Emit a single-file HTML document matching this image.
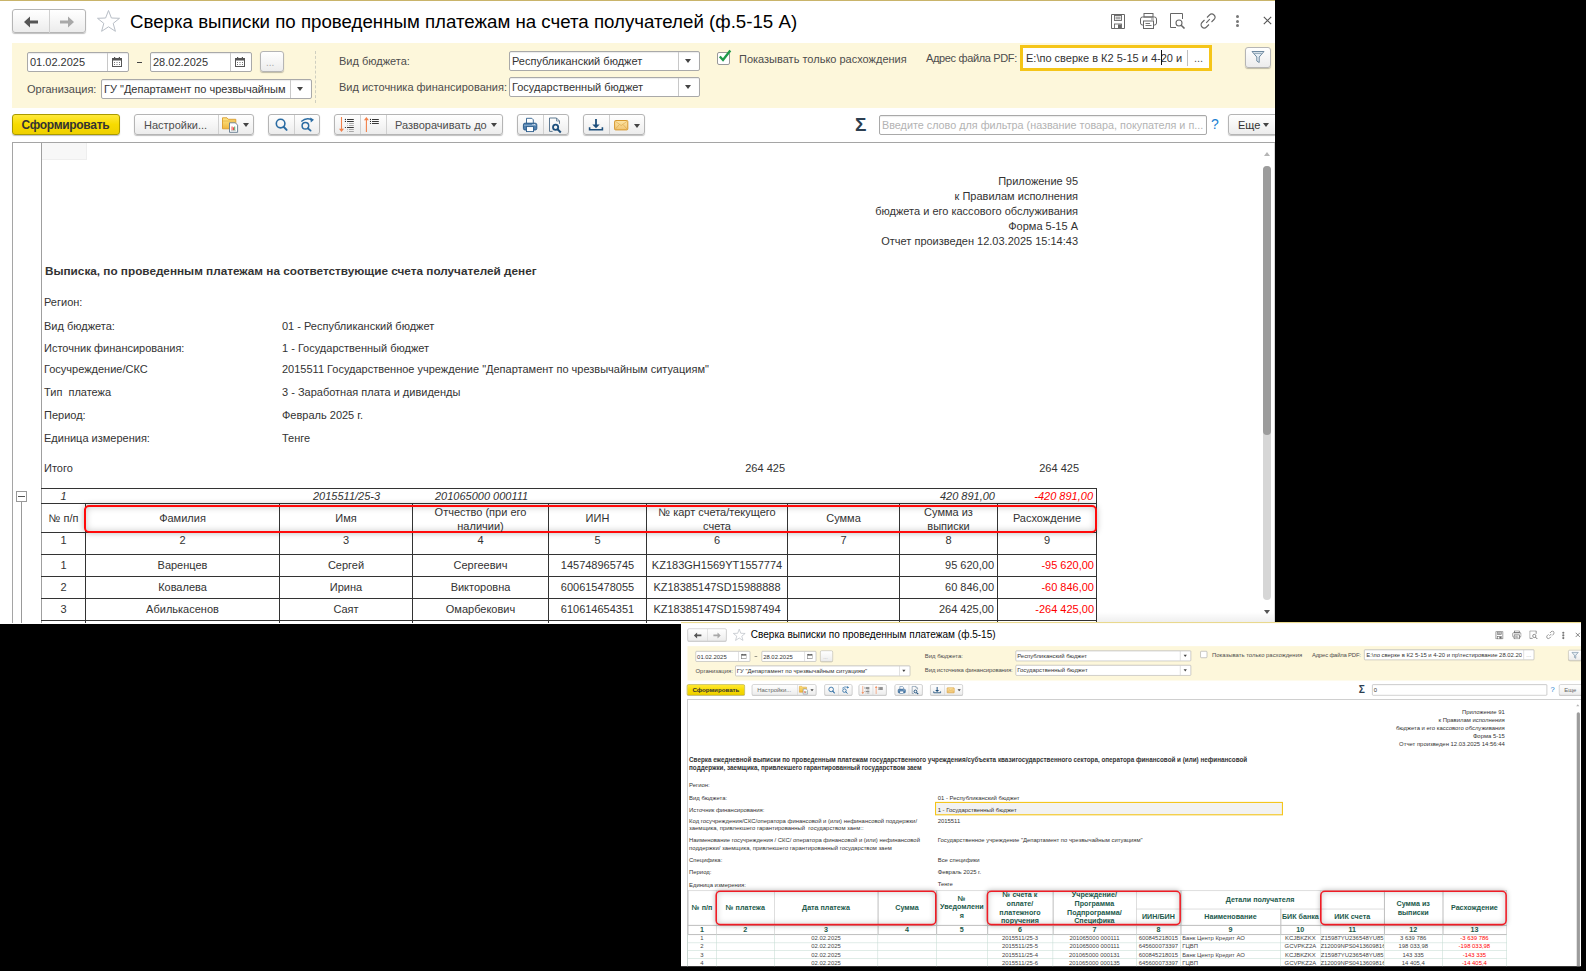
<!DOCTYPE html>
<html><head><meta charset="utf-8">
<style>
html,body{margin:0;padding:0}
body{background:#000;width:1586px;height:971px;overflow:hidden;position:relative;font-family:"Liberation Sans",sans-serif;color:#333}
.w{position:absolute;background:#fff;overflow:hidden}
.a{position:absolute}
.t{position:absolute;white-space:nowrap;font-size:11px;line-height:13px;color:#4d4d4d}
.btn{position:absolute;box-sizing:border-box;border:1px solid #b5b5b5;border-radius:3px;background:linear-gradient(#fff,#f4f4f4 60%,#ececec);box-shadow:0 1px 1px rgba(0,0,0,.25)}
.inp{position:absolute;box-sizing:border-box;border:1px solid #a9a9a9;border-radius:2px;background:#fff;box-shadow:inset 0 1px 1px rgba(0,0,0,.08)}
.div{position:absolute;top:0;bottom:0;width:1px;background:#c8c8c8}
.dd{position:absolute;width:0;height:0;border-left:3.5px solid transparent;border-right:3.5px solid transparent;border-top:4px solid #444}
.g{position:absolute;background:#2b2b2b}
.c{position:absolute;white-space:nowrap;font-size:11px;line-height:13px;color:#333;text-align:center}
</style></head><body>

<!-- ================= WINDOW 1 ================= -->
<div class="w" id="w1" style="left:0;top:0;width:1275px;height:624px">
  <div class="a" style="left:0;top:0;width:1275px;height:1px;background:#c9b46a"></div>

  <!-- nav buttons -->
  <div class="btn" style="left:12px;top:9px;width:74px;height:24px;border-radius:3px"></div>
  <div class="a" style="left:49px;top:10px;width:1px;height:23px;background:#d0d0d0"></div>
  <svg class="a" style="left:24px;top:16px" width="16" height="12" viewBox="0 0 16 12"><path d="M0 6 L6 0.5 V4.5 H14 V7.5 H6 V11.5 Z" fill="#555"/></svg>
  <svg class="a" style="left:60px;top:16px" width="16" height="12" viewBox="0 0 16 12"><path d="M14 6 L8 0.5 V4.5 H0 V7.5 H8 V11.5 Z" fill="#a8a8a8"/></svg>
  <!-- star -->
  <svg class="a" style="left:96px;top:9px" width="25" height="24" viewBox="0 0 25 24"><path d="M12.5 1.5 L15.4 9 L23.5 9.3 L17.2 14.4 L19.4 22.3 L12.5 17.8 L5.6 22.3 L7.8 14.4 L1.5 9.3 L9.6 9 Z" fill="none" stroke="#b8bec6" stroke-width="1"/></svg>
  <div class="t" style="left:130px;top:11px;font-size:18.7px;line-height:22px;color:#000">Сверка выписки по проведенным платежам на счета получателей (ф.5-15 А)</div>


  <!-- title bar icons -->
  <svg class="a" style="left:1110px;top:14px" width="16" height="15" viewBox="0 0 16 15"><path d="M1.5 0.5 H14.5 V14.5 H1.5 Z" fill="none" stroke="#666" stroke-width="1" rx="1"/><rect x="4.5" y="1.5" width="7" height="5" fill="none" stroke="#666" stroke-width="0.9"/><path d="M5.5 3.2 H10.5 M5.5 4.8 H10.5" stroke="#666" stroke-width="0.8"/><rect x="4.5" y="10" width="7" height="4.5" fill="#fff" stroke="#666" stroke-width="0.9"/><rect x="8" y="10.5" width="3" height="3.5" fill="#666"/></svg>
  <svg class="a" style="left:1140px;top:13px" width="17" height="16" viewBox="0 0 17 16"><rect x="4" y="0.5" width="9" height="3.5" fill="none" stroke="#666" stroke-width="1"/><rect x="0.5" y="4" width="16" height="8" rx="2" fill="none" stroke="#666" stroke-width="1"/><rect x="3.5" y="8" width="10" height="7.5" fill="#fff" stroke="#666" stroke-width="1"/><path d="M5.5 10.5 H10 M5.5 12.5 H11.5" stroke="#666" stroke-width="0.9"/><path d="M11 6 H14" stroke="#666" stroke-width="0.8"/></svg>
  <svg class="a" style="left:1170px;top:13px" width="16" height="16" viewBox="0 0 16 16"><path d="M6 14.5 H0.5 V0.5 H12.5 V6" fill="none" stroke="#666" stroke-width="1"/><circle cx="9" cy="10" r="3" fill="none" stroke="#666" stroke-width="1.1"/><path d="M11.2 12.2 L14.5 15.5" stroke="#666" stroke-width="1.6"/></svg>
  <svg class="a" style="left:1200px;top:13px" width="16" height="16" viewBox="0 0 16 16"><path d="M6.2 9.8 L9.8 6.2" stroke="#666" stroke-width="1.1"/><path d="M7 4.5 L9.5 2 A2.8 2.8 0 0 1 14 6.5 L11.5 9" fill="none" stroke="#666" stroke-width="1.1"/><path d="M9 11.5 L6.5 14 A2.8 2.8 0 0 1 2 9.5 L4.5 7" fill="none" stroke="#666" stroke-width="1.1"/></svg>
  <g></g>
  <div class="a" style="left:1236px;top:15px;width:3px;height:3px;border-radius:2px;background:#777"></div>
  <div class="a" style="left:1236px;top:19.5px;width:3px;height:3px;border-radius:2px;background:#777"></div>
  <div class="a" style="left:1236px;top:24px;width:3px;height:3px;border-radius:2px;background:#777"></div>
  <svg class="a" style="left:1263px;top:16px" width="9" height="9" viewBox="0 0 9 9"><path d="M0.8 0.8 L8.2 8.2 M8.2 0.8 L0.8 8.2" stroke="#555" stroke-width="1.1"/></svg>
  <!-- yellow panel -->
  <div class="a" style="left:12px;top:43px;width:1263px;height:65px;background:#fdf7db"></div>

  <!-- date 1 -->
  <div class="inp" style="left:27px;top:52px;width:102px;height:20px"><div class="div" style="left:79px"></div></div>
  <div class="t" style="left:30px;top:56px;color:#333;font-size:11px">01.02.2025</div>
  <svg class="a" style="left:112px;top:57px" width="10" height="10" viewBox="0 0 10 10"><rect x="0.5" y="1.5" width="9" height="8" fill="none" stroke="#555"/><rect x="0.5" y="1.5" width="9" height="2" fill="#555"/><rect x="2" y="0" width="1.2" height="2.5" fill="#555"/><rect x="6.8" y="0" width="1.2" height="2.5" fill="#555"/><g fill="#777"><rect x="2" y="5" width="1" height="1"/><rect x="4.5" y="5" width="1" height="1"/><rect x="7" y="5" width="1" height="1"/><rect x="2" y="7" width="1" height="1"/><rect x="4.5" y="7" width="1" height="1"/><rect x="7" y="7" width="1" height="1"/></g></svg>
  <div class="a" style="left:137px;top:62px;width:5px;height:1px;background:#444"></div>
  <!-- date 2 -->
  <div class="inp" style="left:150px;top:52px;width:102px;height:20px"><div class="div" style="left:79px"></div></div>
  <div class="t" style="left:153px;top:56px;color:#333;font-size:11px">28.02.2025</div>
  <svg class="a" style="left:235px;top:57px" width="10" height="10" viewBox="0 0 10 10"><rect x="0.5" y="1.5" width="9" height="8" fill="none" stroke="#555"/><rect x="0.5" y="1.5" width="9" height="2" fill="#555"/><rect x="2" y="0" width="1.2" height="2.5" fill="#555"/><rect x="6.8" y="0" width="1.2" height="2.5" fill="#555"/><g fill="#777"><rect x="2" y="5" width="1" height="1"/><rect x="4.5" y="5" width="1" height="1"/><rect x="7" y="5" width="1" height="1"/><rect x="2" y="7" width="1" height="1"/><rect x="4.5" y="7" width="1" height="1"/><rect x="7" y="7" width="1" height="1"/></g></svg>
  <div class="btn" style="left:260px;top:51px;width:24px;height:21px"></div>
  <div class="t" style="left:266px;top:56px;color:#aaa;font-size:10px">...</div>
  <div class="a" style="left:315px;top:51px;width:0;height:52px;border-left:1px dashed #cfcfc0"></div>
  <!-- org -->
  <div class="t" style="left:27px;top:83px">Организация:</div>
  <div class="inp" style="left:101px;top:79px;width:211px;height:20px;overflow:hidden"><div class="div" style="left:188px"></div></div>
  <div class="t" style="left:104px;top:83px;color:#333;width:184px;overflow:hidden">ГУ "Департамент по чрезвычайным ситуациям"</div>
  <div class="dd" style="left:297px;top:87px"></div>
  <!-- budget -->
  <div class="t" style="left:339px;top:55px">Вид бюджета:</div>
  <div class="t" style="left:339px;top:81px">Вид источника финансирования:</div>
  <div class="inp" style="left:509px;top:51px;width:191px;height:20px"><div class="div" style="left:168px"></div></div>
  <div class="t" style="left:512px;top:55px;color:#333">Республиканский бюджет</div>
  <div class="dd" style="left:685px;top:59px"></div>
  <div class="inp" style="left:509px;top:77px;width:191px;height:20px"><div class="div" style="left:168px"></div></div>
  <div class="t" style="left:512px;top:81px;color:#333">Государственный бюджет</div>
  <div class="dd" style="left:685px;top:85px"></div>
  <!-- checkbox -->
  <div class="a" style="left:717px;top:52px;width:13px;height:13px;box-sizing:border-box;border:1px solid #999;border-radius:2px;background:#fff"></div>
  <svg class="a" style="left:718px;top:49px" width="14" height="14" viewBox="0 0 14 14"><path d="M1.8 7.5 L5 11 L12.3 1.5" fill="none" stroke="#1e9a4a" stroke-width="2.4"/></svg>
  <div class="t" style="left:739px;top:53px">Показывать только расхождения</div>
  <div class="t" style="left:926px;top:52px;letter-spacing:-0.35px">Адрес файла PDF:</div>
  <div class="a" style="left:1020px;top:45px;width:192px;height:26px;box-sizing:border-box;border:3px solid #f5c518;background:#fff"></div>
  <div class="a" style="left:1187px;top:50px;width:1px;height:16px;background:#c0c0c0"></div>
  <div class="t" style="left:1026px;top:52px;color:#333">E:\по сверке в К2 5-15 и 4-20 и</div>
  <div class="a" style="left:1161px;top:50px;width:1px;height:15px;background:#111"></div>
  <div class="t" style="left:1194px;top:52px;color:#555">...</div>
  <div class="btn" style="left:1245px;top:47px;width:26px;height:21px"></div>
  <svg class="a" style="left:1251px;top:50px" width="14" height="14" viewBox="0 0 14 14"><path d="M1 1.5 H13 L8.2 7 V12.5 L5.8 11 V7 Z" fill="#e6eef5" stroke="#6f8aa0" stroke-width="1"/><path d="M3.3 3.3 H10.7" stroke="#6f8aa0" stroke-width="0.8"/></svg>

  <!-- ======= toolbar ======= -->
  <div class="a" style="left:12px;top:114px;width:108px;height:21px;box-sizing:border-box;border:1px solid #a99a00;border-radius:3px;background:linear-gradient(#ffe93a,#f7db00 50%,#efd000);box-shadow:0 1px 1px rgba(0,0,0,.25)"></div>
  <div class="t" style="left:21.5px;top:118.5px;font-weight:bold;font-size:12px;letter-spacing:-0.3px;color:#333">Сформировать</div>

  <div class="btn" style="left:134px;top:114px;width:120px;height:21px"><div class="div" style="left:83px;background:#d0d0d0"></div></div>
  <div class="t" style="left:144px;top:119px">Настройки...</div>
  <svg class="a" style="left:215px;top:112px" width="30" height="26" viewBox="0 0 30 26"><defs><linearGradient id="fg" x1="0" y1="0" x2="0" y2="1"><stop offset="0" stop-color="#ffe98a"/><stop offset="1" stop-color="#f0b63c"/></linearGradient></defs><path d="M7.5 5.8 H12 L13.3 7.3 H20.8 V16.8 H7.5 Z" fill="url(#fg)" stroke="#d99a2b" stroke-width="0.9"/><path d="M7.6 9 H20.7" stroke="#e2ac3e" stroke-width="0.7"/><path d="M14.5 10.8 H20.3 L22.6 13.1 V20.3 H14.5 Z" fill="#fff" stroke="#62788c" stroke-width="0.9"/><rect x="16.6" y="14.5" width="0.9" height="3.8" fill="#e53030"/><rect x="18" y="15.3" width="0.9" height="3" fill="#e53030"/><rect x="19.3" y="14.5" width="0.9" height="3.8" fill="#3aa04a"/><path d="M16 18.6 H21" stroke="#9aa" stroke-width="0.5"/></svg>
  <div class="dd" style="left:243px;top:123px"></div>

  <div class="btn" style="left:268px;top:114px;width:52px;height:21px"><div class="div" style="left:25px;background:#d0d0d0"></div></div>
  <svg class="a" style="left:268px;top:112px" width="52" height="26" viewBox="0 0 52 26"><circle cx="12.6" cy="11.6" r="4.3" fill="none" stroke="#2b6ca3" stroke-width="1.6"/><path d="M15.6 14.8 L18.6 17.9" stroke="#2b6ca3" stroke-width="2" stroke-linecap="round"/><circle cx="37.4" cy="13.8" r="3.3" fill="none" stroke="#2b6ca3" stroke-width="1.5"/><path d="M39.8 16.3 L42.6 18.6" stroke="#2b6ca3" stroke-width="1.8" stroke-linecap="round"/><path d="M33.3 9.4 Q38 5.2 43.6 7.6" fill="none" stroke="#2b6ca3" stroke-width="1.3"/><path d="M42.2 5.6 L46 7.7 L42.8 10.4 Z" fill="#2b6ca3"/></svg>

  <div class="btn" style="left:334px;top:114px;width:169px;height:21px"><div class="div" style="left:25px;background:#d0d0d0"></div><div class="div" style="left:51px;background:#d0d0d0"></div></div>
  <svg class="a" style="left:332px;top:112px" width="52" height="26" viewBox="0 0 52 26"><path d="M9.5 5 V17.5" stroke="#f2804a" stroke-width="1.1"/><path d="M7 16.8 H12 L9.5 20 Z" fill="#f2804a"/><g fill="#222"><circle cx="13.4" cy="7.4" r="0.6"/><rect x="15" y="7" width="6.8" height="0.9"/><circle cx="13.4" cy="9.4" r="0.6"/><rect x="15" y="9" width="6.8" height="0.9"/><circle cx="13.4" cy="15.5" r="0.6"/><rect x="15" y="15.1" width="6.8" height="0.9"/></g><g fill="#888"><circle cx="15.4" cy="11.5" r="0.45"/><rect x="17" y="11.2" width="4.8" height="0.7"/><circle cx="15.4" cy="13.4" r="0.45"/><rect x="17" y="13.1" width="4.8" height="0.7"/><circle cx="15.4" cy="17.5" r="0.45"/><rect x="17" y="17.2" width="4.8" height="0.7"/><circle cx="15.4" cy="19.4" r="0.45"/><rect x="17" y="19.1" width="4.8" height="0.7"/></g><path d="M34.4 7.5 V20" stroke="#f2804a" stroke-width="1.1"/><path d="M31.9 8.3 H36.9 L34.4 5 Z" fill="#f2804a"/><g fill="#222"><circle cx="38.5" cy="7.4" r="0.6"/><rect x="40" y="7" width="6.8" height="0.9"/><circle cx="38.5" cy="9.4" r="0.6"/><rect x="40" y="9" width="6.8" height="0.9"/><circle cx="38.5" cy="11.5" r="0.6"/><rect x="40" y="11.1" width="6.8" height="0.9"/></g></svg>
  <div class="t" style="left:395px;top:119px">Разворачивать до</div>
  <div class="dd" style="left:491px;top:123px"></div>

  <div class="btn" style="left:517px;top:114px;width:52px;height:21px"><div class="div" style="left:25px;background:#d0d0d0"></div></div>
  <svg class="a" style="left:515px;top:112px" width="52" height="26" viewBox="0 0 52 26"><path d="M11.5 6.3 H16.8 L18.3 7.8 V11.5 H11.5 Z" fill="#fff" stroke="#2c5d8c" stroke-width="0.9"/><rect x="8.4" y="11.2" width="13.4" height="6.8" rx="1.6" fill="#4f7fae" stroke="#2c5d8c" stroke-width="1"/><path d="M9 13.3 H21.2" stroke="#8fb0d0" stroke-width="0.9"/><rect x="17.5" y="12" width="1" height="0.9" fill="#fff"/><rect x="19.2" y="12" width="1" height="0.9" fill="#fff"/><rect x="11.5" y="14.6" width="7" height="5" fill="#fff" stroke="#2c5d8c" stroke-width="0.9"/><path d="M44.5 11.8 V9 L41.5 6 H34.5 V19.4 H37.6" fill="none" stroke="#4d6b87" stroke-width="0.9"/><path d="M41.5 6 V9 H44.5" fill="none" stroke="#4d6b87" stroke-width="0.7"/><circle cx="40.6" cy="15.3" r="2.6" fill="none" stroke="#1d4f7c" stroke-width="1.8"/><path d="M42.6 17.3 L45.8 20.5" stroke="#1d4f7c" stroke-width="2"/></svg>

  <div class="btn" style="left:583px;top:114px;width:62px;height:21px"><div class="div" style="left:25px;background:#d0d0d0"></div></div>
  <svg class="a" style="left:583px;top:112px" width="48" height="26" viewBox="0 0 48 26"><path d="M13 7 V14" stroke="#1d4f7c" stroke-width="1.8"/><path d="M9.3 12.5 H16.7 L13 16.3 Z" fill="#1d4f7c"/><path d="M6.6 15.2 V17.8 H19.4 V15.2" fill="none" stroke="#1d4f7c" stroke-width="1.6"/><defs><linearGradient id="eg" x1="0" y1="0" x2="0" y2="1"><stop offset="0" stop-color="#fde5a6"/><stop offset="1" stop-color="#f1c472"/></linearGradient></defs><rect x="31.6" y="8.5" width="13.2" height="9.4" rx="1" fill="url(#eg)" stroke="#d6982e" stroke-width="1"/><path d="M32 9 L38.2 13.6 L44.4 9 M32 17.5 L36.3 12.6 M44.4 17.5 L40.1 12.6" fill="none" stroke="#d9a445" stroke-width="0.6"/></svg>
  <div class="dd" style="left:634px;top:124px"></div>

  <div class="t" style="left:855px;top:115px;font-size:19px;line-height:20px;color:#2c3e50;font-weight:bold">&#931;</div>
  <div class="inp" style="left:879px;top:115px;width:328px;height:20px"></div>
  <div class="t" style="left:882px;top:119px;color:#b3b3b3;font-size:10.8px;width:322px;overflow:hidden">Введите слово для фильтра (название товара, покупателя и п...</div>
  <div class="t" style="left:1211px;top:116px;font-size:14px;line-height:16px;color:#1b7fd1">?</div>
  <div class="btn" style="left:1228px;top:114px;width:50px;height:21px"></div>
  <div class="t" style="left:1238px;top:119px;color:#333">Еще</div>
  <div class="dd" style="left:1263px;top:123px"></div>

  <!-- doc area -->
  <div class="a" style="left:12px;top:142px;width:1263px;height:1px;background:#a5a5a5"></div>
  <div class="a" style="left:12px;top:142px;width:1px;height:481px;background:#a5a5a5"></div>
  <div class="a" style="left:41px;top:143px;width:1px;height:480px;background:#9f9f9f"></div>
  <div class="a" style="left:42px;top:143px;width:45px;height:17px;box-sizing:border-box;background:#f7f7f7;border-right:1px solid #eee;border-bottom:1px solid #eee"></div>

  <!-- report header -->
  <div class="t" style="left:700px;width:378px;text-align:right;top:174px;color:#333;line-height:15px">Приложение 95<br>к Правилам исполнения<br>бюджета и его кассового обслуживания<br>Форма 5-15 А<br>Отчет произведен 12.03.2025 15:14:43</div>
  <div class="t" style="left:45px;top:264px;font-weight:bold;font-size:11.76px;line-height:14px;color:#333">Выписка, по проведенным платежам на соответствующие счета получателей денег</div>
  <div class="t" style="left:44px;top:296px;color:#333">Регион:</div>
  <div class="t" style="left:44px;top:320px;color:#333">Вид бюджета:</div>
  <div class="t" style="left:282px;top:320px;color:#333">01 - Республиканский бюджет</div>
  <div class="t" style="left:44px;top:342px;color:#333">Источник финансирования:</div>
  <div class="t" style="left:282px;top:342px;color:#333">1 - Государственный бюджет</div>
  <div class="t" style="left:44px;top:363px;color:#333">Госучреждение/СКС</div>
  <div class="t" style="left:282px;top:363px;color:#333">2015511 Государственное учреждение "Департамент по чрезвычайным ситуациям"</div>
  <div class="t" style="left:44px;top:386px;color:#333;white-space:pre">Тип  платежа</div>
  <div class="t" style="left:282px;top:386px;color:#333">3 - Заработная плата и дивиденды</div>
  <div class="t" style="left:44px;top:409px;color:#333">Период:</div>
  <div class="t" style="left:282px;top:409px;color:#333">Февраль 2025 г.</div>
  <div class="t" style="left:44px;top:432px;color:#333">Единица измерения:</div>
  <div class="t" style="left:282px;top:432px;color:#333">Тенге</div>
  <div class="t" style="left:44px;top:462px;color:#333">Итого</div>
  <div class="t" style="left:685px;width:100px;text-align:right;top:462px;color:#333">264 425</div>
  <div class="t" style="left:979px;width:100px;text-align:right;top:462px;color:#333">264 425</div>

  <!-- collapse -->
  <div class="a" style="left:16px;top:491px;width:11px;height:11px;box-sizing:border-box;border:1px solid #999;background:#fff"></div>
  <div class="a" style="left:18px;top:496px;width:7px;height:1px;background:#555"></div>
  <div class="a" style="left:21px;top:502px;width:1px;height:121px;background:#999"></div>

  <!-- table lines -->
  <div class="a" style="left:41px;top:488px;width:1056px;height:1px;background:#333"></div>
  <div class="a" style="left:41px;top:503px;width:1056px;height:1px;background:#333"></div>
  <div class="a" style="left:41px;top:532px;width:1056px;height:1px;background:#333"></div>
  <div class="a" style="left:41px;top:554px;width:1056px;height:1px;background:#333"></div>
  <div class="a" style="left:41px;top:576px;width:1056px;height:1px;background:#333"></div>
  <div class="a" style="left:41px;top:598px;width:1056px;height:1px;background:#333"></div>
  <div class="a" style="left:41px;top:620px;width:1056px;height:1px;background:#333"></div>
  <div class="a" style="left:1096px;top:488px;width:1px;height:135px;background:#333"></div>
  <div class="a" style="left:85px;top:503px;width:1px;height:120px;background:#333"></div>
  <div class="a" style="left:279px;top:503px;width:1px;height:120px;background:#333"></div>
  <div class="a" style="left:412px;top:503px;width:1px;height:120px;background:#333"></div>
  <div class="a" style="left:548px;top:503px;width:1px;height:120px;background:#333"></div>
  <div class="a" style="left:646px;top:503px;width:1px;height:120px;background:#333"></div>
  <div class="a" style="left:787px;top:503px;width:1px;height:120px;background:#333"></div>
  <div class="a" style="left:899px;top:503px;width:1px;height:120px;background:#333"></div>
  <div class="a" style="left:997px;top:503px;width:1px;height:120px;background:#333"></div>

  <!-- italic row -->
  <div class="t" style="left:42px;width:43px;text-align:center;top:490px;font-style:italic;color:#333">1</div>
  <div class="t" style="left:313px;top:490px;font-style:italic;color:#333">2015511/25-3</div>
  <div class="t" style="left:435px;top:490px;font-style:italic;color:#333">201065000 000111</div>
  <div class="t" style="left:895px;width:100px;text-align:right;top:490px;font-style:italic;color:#333">420 891,00</div>
  <div class="t" style="left:993px;width:100px;text-align:right;top:490px;font-style:italic;color:#f00">-420 891,00</div>

  <!-- red box -->
  <div class="a" style="left:84px;top:504.5px;width:1013px;height:28.5px;box-sizing:border-box;border:2.5px solid #ff0a0a;border-radius:5px;box-shadow:0 0 6px rgba(0,0,0,.28),inset 0 0 7px rgba(0,0,0,.22)"></div>

  <!-- header -->
  <div class="c" style="left:42px;width:43px;top:512px">№ п/п</div>
  <div class="c" style="left:86px;width:193px;top:512px">Фамилия</div>
  <div class="c" style="left:280px;width:132px;top:512px">Имя</div>
  <div class="c" style="left:413px;width:135px;top:505px;line-height:14px">Отчество (при его<br>наличии)</div>
  <div class="c" style="left:549px;width:97px;top:512px">ИИН</div>
  <div class="c" style="left:647px;width:140px;top:505px;line-height:14px">№ карт счета/текущего<br>счета</div>
  <div class="c" style="left:788px;width:111px;top:512px">Сумма</div>
  <div class="c" style="left:900px;width:97px;top:505px;line-height:14px">Сумма из<br>выписки</div>
  <div class="c" style="left:998px;width:98px;top:512px">Расхождение</div>
  <!-- numbers -->
  <div class="c" style="left:42px;width:43px;top:534px">1</div>
  <div class="c" style="left:86px;width:193px;top:534px">2</div>
  <div class="c" style="left:280px;width:132px;top:534px">3</div>
  <div class="c" style="left:413px;width:135px;top:534px">4</div>
  <div class="c" style="left:549px;width:97px;top:534px">5</div>
  <div class="c" style="left:647px;width:140px;top:534px">6</div>
  <div class="c" style="left:788px;width:111px;top:534px">7</div>
  <div class="c" style="left:900px;width:97px;top:534px">8</div>
  <div class="c" style="left:998px;width:98px;top:534px">9</div>
  <!-- rows -->
  <div class="c" style="left:42px;width:43px;top:559px">1</div>
  <div class="c" style="left:86px;width:193px;top:559px">Варенцев</div>
  <div class="c" style="left:280px;width:132px;top:559px">Сергей</div>
  <div class="c" style="left:413px;width:135px;top:559px">Сергеевич</div>
  <div class="c" style="left:549px;width:97px;top:559px">145748965745</div>
  <div class="c" style="left:647px;width:140px;top:559px">KZ183GH1569YT1557774</div>
  <div class="t" style="left:899px;width:95px;text-align:right;top:559px;color:#333">95 620,00</div>
  <div class="t" style="left:998px;width:96px;text-align:right;top:559px;color:#f00">-95 620,00</div>
  <div class="c" style="left:42px;width:43px;top:581px">2</div>
  <div class="c" style="left:86px;width:193px;top:581px">Ковалева</div>
  <div class="c" style="left:280px;width:132px;top:581px">Ирина</div>
  <div class="c" style="left:413px;width:135px;top:581px">Викторовна</div>
  <div class="c" style="left:549px;width:97px;top:581px">600615478055</div>
  <div class="c" style="left:647px;width:140px;top:581px">KZ18385147SD15988888</div>
  <div class="t" style="left:899px;width:95px;text-align:right;top:581px;color:#333">60 846,00</div>
  <div class="t" style="left:998px;width:96px;text-align:right;top:581px;color:#f00">-60 846,00</div>
  <div class="c" style="left:42px;width:43px;top:603px">3</div>
  <div class="c" style="left:86px;width:193px;top:603px">Абилькасенов</div>
  <div class="c" style="left:280px;width:132px;top:603px">Саят</div>
  <div class="c" style="left:413px;width:135px;top:603px">Омарбекович</div>
  <div class="c" style="left:549px;width:97px;top:603px">610614654351</div>
  <div class="c" style="left:647px;width:140px;top:603px">KZ18385147SD15987494</div>
  <div class="t" style="left:899px;width:95px;text-align:right;top:603px;color:#333">264 425,00</div>
  <div class="t" style="left:998px;width:96px;text-align:right;top:603px;color:#f00">-264 425,00</div>
  <div class="a" style="left:1097px;top:612px;width:178px;height:11px;background:linear-gradient(rgba(0,0,0,0),rgba(0,0,0,.07))"></div>
  <!-- scrollbar -->
  <div class="a" style="left:1274px;top:143px;width:1px;height:479px;background:#d6d6d6"></div>
  <div class="a" style="left:1264px;top:152px;width:0;height:0;border-left:3px solid transparent;border-right:3px solid transparent;border-bottom:4px solid #b5b5b5"></div>
  <div class="a" style="left:1263px;top:166px;width:8px;height:434px;border-radius:4px;background:#d6d6d6"></div>
  <div class="a" style="left:1263px;top:166px;width:8px;height:269px;border-radius:4px;background:#9c9c9c"></div>
  <div class="a" style="left:1264px;top:610px;width:0;height:0;border-left:3px solid transparent;border-right:3px solid transparent;border-top:4px solid #555"></div>
</div>

<!-- ================= WINDOW 2 ================= -->
<div class="w" id="w2" style="left:681px;top:622px;width:1676px;height:641px;transform:scale(0.537);transform-origin:0 0">
<div class="a" style="left:0;top:0;width:1676px;height:2px;background:#e9d98e"></div>
<div class="btn" style="left:12px;top:12px;width:73px;height:24px"></div>
<div class="a" style="left:49px;top:13px;width:1px;height:23px;background:#d0d0d0"></div>
<svg class="a" style="left:24px;top:19px" width="16" height="12" viewBox="0 0 16 12"><path d="M0 6 L6 0.5 V4.5 H14 V7.5 H6 V11.5 Z" fill="#555"/></svg>
<svg class="a" style="left:60px;top:19px" width="16" height="12" viewBox="0 0 16 12"><path d="M14 6 L8 0.5 V4.5 H0 V7.5 H8 V11.5 Z" fill="#a8a8a8"/></svg>
<svg class="a" style="left:96px;top:12px" width="25" height="24" viewBox="0 0 25 24"><path d="M12.5 1.5 L15.4 9 L23.5 9.3 L17.2 14.4 L19.4 22.3 L12.5 17.8 L5.6 22.3 L7.8 14.4 L1.5 9.3 L9.6 9 Z" fill="none" stroke="#b8bec6" stroke-width="1.3"/></svg>
<div class="t" style="left:130px;top:13px;font-size:18.7px;line-height:22px;color:#000">Сверка выписки по проведенным платежам (ф.5-15)</div>
<svg class="a" style="left:1516px;top:17px" width="16" height="15" viewBox="0 0 16 15"><path d="M1.5 0.5 H14.5 V14.5 H1.5 Z" fill="none" stroke="#666" stroke-width="1.3"/><rect x="4.5" y="1.5" width="7" height="5" fill="none" stroke="#666" stroke-width="1.1"/><path d="M5.5 3.2 H10.5 M5.5 4.8 H10.5" stroke="#666" stroke-width="1"/><rect x="4.5" y="10" width="7" height="4.5" fill="#fff" stroke="#666" stroke-width="1.1"/><rect x="8" y="10.5" width="3" height="3.5" fill="#666"/></svg>
<svg class="a" style="left:1548px;top:16px" width="17" height="16" viewBox="0 0 17 16"><rect x="4" y="0.5" width="9" height="3.5" fill="none" stroke="#666" stroke-width="1.3"/><rect x="0.5" y="4" width="16" height="8" rx="2" fill="none" stroke="#666" stroke-width="1.3"/><rect x="3.5" y="8" width="10" height="7.5" fill="#fff" stroke="#666" stroke-width="1.3"/><path d="M5.5 10.5 H10 M5.5 12.5 H11.5" stroke="#666" stroke-width="1.1"/></svg>
<svg class="a" style="left:1580px;top:16px" width="16" height="16" viewBox="0 0 16 16"><path d="M6 14.5 H0.5 V0.5 H12.5 V6" fill="none" stroke="#666" stroke-width="1.3"/><circle cx="9" cy="10" r="3" fill="none" stroke="#666" stroke-width="1.3"/><path d="M11.2 12.2 L14.5 15.5" stroke="#666" stroke-width="1.8"/></svg>
<svg class="a" style="left:1611px;top:16px" width="16" height="16" viewBox="0 0 16 16"><path d="M6.2 9.8 L9.8 6.2" stroke="#666" stroke-width="1.3"/><path d="M7 4.5 L9.5 2 A2.8 2.8 0 0 1 14 6.5 L11.5 9" fill="none" stroke="#666" stroke-width="1.3"/><path d="M9 11.5 L6.5 14 A2.8 2.8 0 0 1 2 9.5 L4.5 7" fill="none" stroke="#666" stroke-width="1.3"/></svg>
<div class="a" style="left:1641px;top:18px;width:3.5px;height:3.5px;border-radius:2px;background:#777"></div>
<div class="a" style="left:1641px;top:23px;width:3.5px;height:3.5px;border-radius:2px;background:#777"></div>
<div class="a" style="left:1641px;top:28px;width:3.5px;height:3.5px;border-radius:2px;background:#777"></div>
<svg class="a" style="left:1665px;top:19px" width="10" height="10" viewBox="0 0 10 10"><path d="M1 1 L9 9 M9 1 L1 9" stroke="#555" stroke-width="1.3"/></svg>
<div class="a" style="left:12px;top:45px;width:1664px;height:64px;background:#fdf7db"></div>
<div class="inp" style="left:27px;top:54px;width:102px;height:20px"><div class="div" style="left:79px"></div></div>
<div class="t" style="left:30px;top:58px;color:#333">01.02.2025</div>
<svg class="a" style="left:112px;top:59px" width="10" height="10" viewBox="0 0 10 10"><rect x="0.5" y="1.5" width="9" height="8" fill="none" stroke="#555"/><rect x="0.5" y="1.5" width="9" height="2" fill="#555"/><rect x="2" y="0" width="1.2" height="2.5" fill="#555"/><rect x="6.8" y="0" width="1.2" height="2.5" fill="#555"/></svg>
<div class="a" style="left:137px;top:64px;width:5px;height:1px;background:#444"></div>
<div class="inp" style="left:150px;top:54px;width:102px;height:20px"><div class="div" style="left:79px"></div></div>
<div class="t" style="left:153px;top:58px;color:#333">28.02.2025</div>
<svg class="a" style="left:235px;top:59px" width="10" height="10" viewBox="0 0 10 10"><rect x="0.5" y="1.5" width="9" height="8" fill="none" stroke="#555"/><rect x="0.5" y="1.5" width="9" height="2" fill="#555"/><rect x="2" y="0" width="1.2" height="2.5" fill="#555"/><rect x="6.8" y="0" width="1.2" height="2.5" fill="#555"/></svg>
<div class="btn" style="left:259px;top:53px;width:24px;height:21px"></div>
<div class="t" style="left:265px;top:58px;color:#aaa;font-size:10px">...</div>
<div class="t" style="left:27px;top:85px;">Организация:</div>
<div class="inp" style="left:101px;top:81px;width:326px;height:20px"><div class="div" style="left:304px"></div></div>
<div class="t" style="left:104px;top:85px;color:#333">ГУ "Департамент по чрезвычайным ситуациям"</div>
<div class="dd" style="left:412px;top:89px"></div>
<div class="t" style="left:454px;top:57px;">Вид бюджета:</div>
<div class="t" style="left:454px;top:83px;letter-spacing:-0.15px">Вид источника финансирования:</div>
<div class="inp" style="left:623px;top:53px;width:327px;height:20px"><div class="div" style="left:305px"></div></div>
<div class="t" style="left:626px;top:57px;color:#333">Республиканский бюджет</div>
<div class="dd" style="left:936px;top:61px"></div>
<div class="inp" style="left:623px;top:80px;width:327px;height:20px"><div class="div" style="left:305px"></div></div>
<div class="t" style="left:626px;top:84px;color:#333">Государственный бюджет</div>
<div class="dd" style="left:936px;top:88px"></div>
<div class="a" style="left:967px;top:54px;width:13px;height:13px;box-sizing:border-box;border:1px solid #999;border-radius:2px;background:#fff"></div>
<div class="t" style="left:989px;top:55px;">Показывать только расхождения</div>
<div class="t" style="left:1175px;top:55px;letter-spacing:-0.35px">Адрес файла PDF:</div>
<div class="inp" style="left:1272px;top:51px;width:317px;height:20px"><div class="div" style="left:296px"></div></div>
<div class="t" style="left:1276px;top:55px;color:#333;width:290px;overflow:hidden">E:\по сверке в К2 5-15 и 4-20 и пр\тестирование 28.02.20</div>
<div class="t" style="left:1574px;top:55px;color:#999">...</div>
<div class="btn" style="left:1652px;top:52px;width:26px;height:20px"></div>
<svg class="a" style="left:1658px;top:55px" width="14" height="14" viewBox="0 0 14 14"><path d="M1 1.5 H13 L8.2 7 V12.5 L5.8 11 V7 Z" fill="#e6eef5" stroke="#6f8aa0" stroke-width="1.2"/></svg>
<div class="a" style="left:11px;top:116px;width:108px;height:21px;box-sizing:border-box;border:1px solid #a99a00;border-radius:3px;background:linear-gradient(#ffe93a,#f7db00 50%,#efd000);box-shadow:0 1px 1px rgba(0,0,0,.25)"></div>
<div class="t" style="left:11px;top:121px;width:108px;text-align:center;font-weight:bold;font-size:11.5px;color:#333">Сформировать</div>
<div class="btn" style="left:132px;top:116px;width:120px;height:21px"><div class="div" style="left:83px;background:#d0d0d0"></div></div>
<div class="t" style="left:142px;top:121px;color:#666">Настройки...</div>
<svg class="a" style="left:213px;top:114px" width="30" height="26" viewBox="0 0 30 26"><defs><linearGradient id="fg2" x1="0" y1="0" x2="0" y2="1"><stop offset="0" stop-color="#ffe98a"/><stop offset="1" stop-color="#f0b63c"/></linearGradient></defs><path d="M7.5 5.8 H12 L13.3 7.3 H20.8 V16.8 H7.5 Z" fill="url(#fg2)" stroke="#d99a2b" stroke-width="0.9"/><path d="M7.6 9 H20.7" stroke="#e2ac3e" stroke-width="0.7"/><path d="M14.5 10.8 H20.3 L22.6 13.1 V20.3 H14.5 Z" fill="#fff" stroke="#62788c" stroke-width="0.9"/><rect x="16.6" y="14.5" width="0.9" height="3.8" fill="#e53030"/><rect x="18" y="15.3" width="0.9" height="3" fill="#e53030"/><rect x="19.3" y="14.5" width="0.9" height="3.8" fill="#3aa04a"/><path d="M16 18.6 H21" stroke="#9aa" stroke-width="0.5"/></svg>
<div class="dd" style="left:241px;top:125px"></div>
<div class="btn" style="left:267px;top:116px;width:52px;height:21px"><div class="div" style="left:25px;background:#d0d0d0"></div></div>
<svg class="a" style="left:267px;top:114px" width="52" height="26" viewBox="0 0 52 26"><circle cx="12.6" cy="11.6" r="4.3" fill="none" stroke="#2b6ca3" stroke-width="1.6"/><path d="M15.6 14.8 L18.6 17.9" stroke="#2b6ca3" stroke-width="2" stroke-linecap="round"/><circle cx="37.4" cy="13.8" r="3.3" fill="none" stroke="#2b6ca3" stroke-width="1.5"/><path d="M39.8 16.3 L42.6 18.6" stroke="#2b6ca3" stroke-width="1.8" stroke-linecap="round"/><path d="M33.3 9.4 Q38 5.2 43.6 7.6" fill="none" stroke="#2b6ca3" stroke-width="1.3"/><path d="M42.2 5.6 L46 7.7 L42.8 10.4 Z" fill="#2b6ca3"/></svg>
<div class="btn" style="left:331px;top:116px;width:52px;height:21px"><div class="div" style="left:25px;background:#d0d0d0"></div></div>
<svg class="a" style="left:329px;top:114px" width="52" height="26" viewBox="0 0 52 26"><path d="M9.5 5 V17.5" stroke="#f2804a" stroke-width="1.1"/><path d="M7 16.8 H12 L9.5 20 Z" fill="#f2804a"/><g fill="#222"><circle cx="13.4" cy="7.4" r="0.6"/><rect x="15" y="7" width="6.8" height="0.9"/><circle cx="13.4" cy="9.4" r="0.6"/><rect x="15" y="9" width="6.8" height="0.9"/><circle cx="13.4" cy="15.5" r="0.6"/><rect x="15" y="15.1" width="6.8" height="0.9"/></g><g fill="#888"><circle cx="15.4" cy="11.5" r="0.45"/><rect x="17" y="11.2" width="4.8" height="0.7"/><circle cx="15.4" cy="13.4" r="0.45"/><rect x="17" y="13.1" width="4.8" height="0.7"/><circle cx="15.4" cy="17.5" r="0.45"/><rect x="17" y="17.2" width="4.8" height="0.7"/><circle cx="15.4" cy="19.4" r="0.45"/><rect x="17" y="19.1" width="4.8" height="0.7"/></g><path d="M34.4 7.5 V20" stroke="#f2804a" stroke-width="1.1"/><path d="M31.9 8.3 H36.9 L34.4 5 Z" fill="#f2804a"/><g fill="#222"><circle cx="38.5" cy="7.4" r="0.6"/><rect x="40" y="7" width="6.8" height="0.9"/><circle cx="38.5" cy="9.4" r="0.6"/><rect x="40" y="9" width="6.8" height="0.9"/><circle cx="38.5" cy="11.5" r="0.6"/><rect x="40" y="11.1" width="6.8" height="0.9"/></g></svg>
<div class="btn" style="left:398px;top:116px;width:52px;height:21px"><div class="div" style="left:25px;background:#d0d0d0"></div></div>
<svg class="a" style="left:396px;top:114px" width="52" height="26" viewBox="0 0 52 26"><path d="M11.5 6.3 H16.8 L18.3 7.8 V11.5 H11.5 Z" fill="#fff" stroke="#2c5d8c" stroke-width="0.9"/><rect x="8.4" y="11.2" width="13.4" height="6.8" rx="1.6" fill="#4f7fae" stroke="#2c5d8c" stroke-width="1"/><path d="M9 13.3 H21.2" stroke="#8fb0d0" stroke-width="0.9"/><rect x="17.5" y="12" width="1" height="0.9" fill="#fff"/><rect x="19.2" y="12" width="1" height="0.9" fill="#fff"/><rect x="11.5" y="14.6" width="7" height="5" fill="#fff" stroke="#2c5d8c" stroke-width="0.9"/><path d="M44.5 11.8 V9 L41.5 6 H34.5 V19.4 H37.6" fill="none" stroke="#4d6b87" stroke-width="0.9"/><path d="M41.5 6 V9 H44.5" fill="none" stroke="#4d6b87" stroke-width="0.7"/><circle cx="40.6" cy="15.3" r="2.6" fill="none" stroke="#1d4f7c" stroke-width="1.8"/><path d="M42.6 17.3 L45.8 20.5" stroke="#1d4f7c" stroke-width="2"/></svg>
<div class="btn" style="left:464px;top:116px;width:61px;height:21px"><div class="div" style="left:25px;background:#d0d0d0"></div></div>
<svg class="a" style="left:464px;top:114px" width="48" height="26" viewBox="0 0 48 26"><path d="M13 7 V14" stroke="#1d4f7c" stroke-width="1.8"/><path d="M9.3 12.5 H16.7 L13 16.3 Z" fill="#1d4f7c"/><path d="M6.6 15.2 V17.8 H19.4 V15.2" fill="none" stroke="#1d4f7c" stroke-width="1.6"/><defs><linearGradient id="eg2" x1="0" y1="0" x2="0" y2="1"><stop offset="0" stop-color="#fde5a6"/><stop offset="1" stop-color="#f1c472"/></linearGradient></defs><rect x="31.6" y="8.5" width="13.2" height="9.4" rx="1" fill="url(#eg2)" stroke="#d6982e" stroke-width="1"/><path d="M32 9 L38.2 13.6 L44.4 9 M32 17.5 L36.3 12.6 M44.4 17.5 L40.1 12.6" fill="none" stroke="#d9a445" stroke-width="0.6"/></svg>
<div class="dd" style="left:515px;top:125px"></div>
<div class="t" style="left:1262px;top:117px;font-size:19px;line-height:20px;color:#2c3e50;font-weight:bold">&#931;</div>
<div class="inp" style="left:1287px;top:116px;width:326px;height:21px"></div>
<div class="t" style="left:1290px;top:121px;color:#333">0</div>
<div class="t" style="left:1619px;top:118px;font-size:14px;line-height:16px;color:#1b7fd1">?</div>
<div class="btn" style="left:1635px;top:116px;width:50px;height:21px"></div>
<div class="t" style="left:1645px;top:121px;color:#666">Еще</div>
<div class="a" style="left:12px;top:144px;width:1664px;height:1px;background:#a5a5a5"></div>
<div class="a" style="left:12px;top:144px;width:1px;height:500px;background:#a5a5a5"></div>
<div class="a" style="left:1668px;top:168px;width:6px;height:480px;border-radius:3px;background:#9c9c9c"></div>
<div class="a" style="left:1667px;top:153px;width:0;height:0;border-left:3px solid transparent;border-right:3px solid transparent;border-bottom:4px solid #b5b5b5"></div>
<div class="t" style="left:1000px;top:160px;width:534px;text-align:right;color:#333;line-height:15px">Приложение 91<br>к Правилам исполнения<br>бюджета и его кассового обслуживания<br>Форма 5-15<br>Отчет произведен 12.03.2025 14:56:44</div>
<div class="t" style="left:15px;top:250px;font-weight:bold;font-size:11.76px;line-height:14.6px;color:#333">Сверка ежедневной выписки по проведенным платежам государственного учреждения/субъекта квазигосударственного сектора, оператора финансовой и (или) нефинансовой<br>поддержки, заемщика, привлекшего гарантированный государством заем</div>
<div class="a" style="left:473px;top:335px;width:648px;height:25px;box-sizing:border-box;border:2px solid #f5c518;background:#f2f2f2"></div>
<div class="t" style="left:478px;top:342.5px;color:#333">1 - Государственный бюджет</div>
<div class="t" style="left:15px;top:297.1px;color:#333;line-height:14.7px">Регион:</div>
<div class="t" style="left:15px;top:321.2px;color:#333;line-height:14.7px">Вид бюджета:</div>
<div class="t" style="left:478px;top:321.2px;color:#333">01 - Республиканский бюджет</div>
<div class="t" style="left:15px;top:342.2px;color:#333;line-height:14.7px">Источник финансирования:</div>
<div class="t" style="left:15px;top:364.0px;color:#333;line-height:13.5px">Код госучреждения/СКС/оператора финансовой и (или) нефинансовой поддержки/<br><span style="white-space:pre">заемщика, привлекшего гарантированный  государством заем::</span></div>
<div class="t" style="left:478px;top:364.0px;color:#333">2015511</div>
<div class="t" style="left:15px;top:399.0px;color:#333;line-height:14.7px">Наименование госучреждения / СКС/ оператора финансовой и (или) нефинансовой<br>поддержки/ заемщика, привлекшего гарантированный государством заем</div>
<div class="t" style="left:478px;top:399.0px;color:#333">Государственное учреждение "Департамент по чрезвычайным ситуациям"</div>
<div class="t" style="left:15px;top:436.0px;color:#333;line-height:14.7px">Специфика:</div>
<div class="t" style="left:478px;top:436.0px;color:#333">Все специфики</div>
<div class="t" style="left:15px;top:458.9px;color:#333;line-height:14.7px">Период:</div>
<div class="t" style="left:478px;top:458.9px;color:#333">Февраль 2025 г.</div>
<div class="t" style="left:15px;top:481.7px;color:#333;line-height:14.7px">Единица измерения:</div>
<div class="t" style="left:478px;top:481.7px;color:#333">Тенге</div>
<div class="a" style="left:12.3px;top:500.4px;width:1525.6000000000001px;height:1px;background:#c2c2c2"></div>
<div class="a" style="left:12.3px;top:564.4px;width:1525.6000000000001px;height:1.5px;background:#c2c2c2"></div>
<div class="a" style="left:12.3px;top:581.4px;width:1525.6000000000001px;height:1.5px;background:#c2c2c2"></div>
<div class="a" style="left:847.7px;top:533.7px;width:462.29999999999995px;height:1.5px;background:#c2c2c2"></div>
<div class="a" style="left:12.3px;top:596.5px;width:1525.6000000000001px;height:1px;background:#c6dbd3"></div>
<div class="a" style="left:12.3px;top:611.4px;width:1525.6000000000001px;height:1px;background:#c6dbd3"></div>
<div class="a" style="left:12.3px;top:626.4px;width:1525.6000000000001px;height:1px;background:#c6dbd3"></div>
<div class="a" style="left:12.3px;top:500.4px;width:1.5px;height:81.0px;background:#c2c2c2"></div>
<div class="a" style="left:12.3px;top:581.4px;width:1px;height:63.60000000000002px;background:#c6dbd3"></div>
<div class="a" style="left:65.9px;top:500.4px;width:1.5px;height:81.0px;background:#c2c2c2"></div>
<div class="a" style="left:65.9px;top:581.4px;width:1px;height:63.60000000000002px;background:#c6dbd3"></div>
<div class="a" style="left:173.6px;top:500.4px;width:1.5px;height:81.0px;background:#c2c2c2"></div>
<div class="a" style="left:173.6px;top:581.4px;width:1px;height:63.60000000000002px;background:#c6dbd3"></div>
<div class="a" style="left:366.3px;top:500.4px;width:1.5px;height:81.0px;background:#c2c2c2"></div>
<div class="a" style="left:366.3px;top:581.4px;width:1px;height:63.60000000000002px;background:#c6dbd3"></div>
<div class="a" style="left:475.4px;top:500.4px;width:1.5px;height:81.0px;background:#c2c2c2"></div>
<div class="a" style="left:475.4px;top:581.4px;width:1px;height:63.60000000000002px;background:#c6dbd3"></div>
<div class="a" style="left:570.4px;top:500.4px;width:1.5px;height:81.0px;background:#c2c2c2"></div>
<div class="a" style="left:570.4px;top:581.4px;width:1px;height:63.60000000000002px;background:#c6dbd3"></div>
<div class="a" style="left:692px;top:500.4px;width:1.5px;height:81.0px;background:#c2c2c2"></div>
<div class="a" style="left:692px;top:581.4px;width:1px;height:63.60000000000002px;background:#c6dbd3"></div>
<div class="a" style="left:847.7px;top:500.4px;width:1.5px;height:81.0px;background:#c2c2c2"></div>
<div class="a" style="left:847.7px;top:581.4px;width:1px;height:63.60000000000002px;background:#c6dbd3"></div>
<div class="a" style="left:930.4px;top:500.4px;width:1.5px;height:81.0px;background:#c2c2c2"></div>
<div class="a" style="left:930.4px;top:581.4px;width:1px;height:63.60000000000002px;background:#c6dbd3"></div>
<div class="a" style="left:1116px;top:533.7px;width:1.5px;height:47.69999999999993px;background:#c2c2c2"></div>
<div class="a" style="left:1116px;top:581.4px;width:1px;height:63.60000000000002px;background:#c6dbd3"></div>
<div class="a" style="left:1190.7px;top:500.4px;width:1.5px;height:81.0px;background:#c2c2c2"></div>
<div class="a" style="left:1190.7px;top:581.4px;width:1px;height:63.60000000000002px;background:#c6dbd3"></div>
<div class="a" style="left:1309px;top:500.4px;width:1.5px;height:81.0px;background:#c2c2c2"></div>
<div class="a" style="left:1309px;top:581.4px;width:1px;height:63.60000000000002px;background:#c6dbd3"></div>
<div class="a" style="left:1418px;top:500.4px;width:1.5px;height:81.0px;background:#c2c2c2"></div>
<div class="a" style="left:1418px;top:581.4px;width:1px;height:63.60000000000002px;background:#c6dbd3"></div>
<div class="a" style="left:1536.9px;top:500.4px;width:1.5px;height:81.0px;background:#c2c2c2"></div>
<div class="a" style="left:1536.9px;top:581.4px;width:1px;height:63.60000000000002px;background:#c6dbd3"></div>
<div class="c" style="left:12.3px;width:53.60000000000001px;top:525.0px;font-weight:bold;font-size:13.3px;line-height:16px;color:#225a4b">№ п/п</div>
<div class="c" style="left:65.9px;width:107.69999999999999px;top:525.0px;font-weight:bold;font-size:13.3px;line-height:16px;color:#225a4b">№ платежа</div>
<div class="c" style="left:173.6px;width:192.70000000000002px;top:525.0px;font-weight:bold;font-size:13.3px;line-height:16px;color:#225a4b">Дата платежа</div>
<div class="c" style="left:366.3px;width:109.09999999999997px;top:525.0px;font-weight:bold;font-size:13.3px;line-height:16px;color:#225a4b">Сумма</div>
<div class="c" style="left:475.4px;width:95.0px;top:507.0px;font-weight:bold;font-size:13.3px;line-height:16px;color:#225a4b">№<br>Уведомлени<br>я</div>
<div class="a" style="left:570.4px;top:501.4px;width:277.30000000000007px;height:63.0px;overflow:hidden">
<div class="c" style="left:0.0px;width:121.60000000000002px;top:-0.1px;font-weight:bold;font-size:13.3px;line-height:16px;color:#225a4b">№ счета к<br>оплате/<br>платежного<br>поручения</div>
<div class="c" style="left:121.60000000000002px;width:155.70000000000005px;top:-0.1px;font-weight:bold;font-size:13.3px;line-height:16px;color:#225a4b">Учреждение/<br>Программа<br>Подпрограмма/<br>Специфика</div>
</div>
<div class="c" style="left:847.7px;width:82.69999999999993px;top:540.5px;font-weight:bold;font-size:13.3px;line-height:16px;color:#225a4b">ИИН/БИН</div>
<div class="c" style="left:847.7px;width:461.29999999999995px;top:508.9px;font-weight:bold;font-size:13.3px;line-height:16px;color:#225a4b">Детали получателя</div>
<div class="c" style="left:930.4px;width:185.60000000000002px;top:540.5px;font-weight:bold;font-size:13.3px;line-height:16px;color:#225a4b">Наименование</div>
<div class="c" style="left:1116px;width:74.70000000000005px;top:540.5px;font-weight:bold;font-size:13.3px;line-height:16px;color:#225a4b">БИК банка</div>
<div class="c" style="left:1190.7px;width:118.29999999999995px;top:540.5px;font-weight:bold;font-size:13.3px;line-height:16px;color:#225a4b">ИИК счета</div>
<div class="c" style="left:1309px;width:109px;top:516.6px;font-weight:bold;font-size:13.3px;line-height:16px;color:#225a4b">Сумма из<br>выписки</div>
<div class="c" style="left:1418px;width:118.90000000000009px;top:524.6px;font-weight:bold;font-size:13.3px;line-height:16px;color:#225a4b">Расхождение</div>
<div class="c" style="left:12.3px;width:53.60000000000001px;top:565.9px;font-weight:bold;font-size:13.3px;line-height:16px;color:#225a4b">1</div>
<div class="c" style="left:65.9px;width:107.69999999999999px;top:565.9px;font-weight:bold;font-size:13.3px;line-height:16px;color:#225a4b">2</div>
<div class="c" style="left:173.6px;width:192.70000000000002px;top:565.9px;font-weight:bold;font-size:13.3px;line-height:16px;color:#225a4b">3</div>
<div class="c" style="left:366.3px;width:109.09999999999997px;top:565.9px;font-weight:bold;font-size:13.3px;line-height:16px;color:#225a4b">4</div>
<div class="c" style="left:475.4px;width:95.0px;top:565.9px;font-weight:bold;font-size:13.3px;line-height:16px;color:#225a4b">5</div>
<div class="c" style="left:570.4px;width:121.60000000000002px;top:565.9px;font-weight:bold;font-size:13.3px;line-height:16px;color:#225a4b">6</div>
<div class="c" style="left:692px;width:155.70000000000005px;top:565.9px;font-weight:bold;font-size:13.3px;line-height:16px;color:#225a4b">7</div>
<div class="c" style="left:847.7px;width:82.69999999999993px;top:565.9px;font-weight:bold;font-size:13.3px;line-height:16px;color:#225a4b">8</div>
<div class="c" style="left:930.4px;width:185.60000000000002px;top:565.9px;font-weight:bold;font-size:13.3px;line-height:16px;color:#225a4b">9</div>
<div class="c" style="left:1116px;width:74.70000000000005px;top:565.9px;font-weight:bold;font-size:13.3px;line-height:16px;color:#225a4b">10</div>
<div class="c" style="left:1190.7px;width:118.29999999999995px;top:565.9px;font-weight:bold;font-size:13.3px;line-height:16px;color:#225a4b">11</div>
<div class="c" style="left:1309px;width:109px;top:565.9px;font-weight:bold;font-size:13.3px;line-height:16px;color:#225a4b">12</div>
<div class="c" style="left:1418px;width:118.90000000000009px;top:565.9px;font-weight:bold;font-size:13.3px;line-height:16px;color:#225a4b">13</div>
<div class="c" style="left:12.3px;width:53.60000000000001px;top:583.3px;color:#444;overflow:hidden">1</div>
<div class="c" style="left:173.6px;width:192.70000000000002px;top:583.3px;color:#444;overflow:hidden">02.02.2025</div>
<div class="c" style="left:570.4px;width:121.60000000000002px;top:583.3px;color:#444;overflow:hidden">2015511/25-3</div>
<div class="c" style="left:692px;width:155.70000000000005px;top:583.3px;color:#444;overflow:hidden">201065000 000111</div>
<div class="c" style="left:847.7px;width:82.69999999999993px;top:583.3px;color:#444;overflow:hidden">600845218015</div>
<div class="t" style="left:933.4px;top:583.3px;color:#444">Банк Центр Кредит АО</div>
<div class="c" style="left:1116px;width:74.70000000000005px;top:583.3px;color:#444;overflow:hidden">KCJBKZKX</div>
<div class="c" style="left:1190.7px;width:118.29999999999995px;top:583.3px;color:#444;overflow:hidden">Z15987YU236548YU85</div>
<div class="c" style="left:1309px;width:109px;top:583.3px;color:#444;overflow:hidden">3 639 786</div>
<div class="c" style="left:1418px;width:118.90000000000009px;top:583.3px;color:#f00;overflow:hidden">-3 639 786</div>
<div class="c" style="left:12.3px;width:53.60000000000001px;top:598.3px;color:#444;overflow:hidden">2</div>
<div class="c" style="left:173.6px;width:192.70000000000002px;top:598.3px;color:#444;overflow:hidden">02.02.2025</div>
<div class="c" style="left:570.4px;width:121.60000000000002px;top:598.3px;color:#444;overflow:hidden">2015511/25-5</div>
<div class="c" style="left:692px;width:155.70000000000005px;top:598.3px;color:#444;overflow:hidden">201065000 000111</div>
<div class="c" style="left:847.7px;width:82.69999999999993px;top:598.3px;color:#444;overflow:hidden">645600073397</div>
<div class="t" style="left:933.4px;top:598.3px;color:#444">ГЦВП</div>
<div class="c" style="left:1116px;width:74.70000000000005px;top:598.3px;color:#444;overflow:hidden">GCVPKZ2A</div>
<div class="c" style="left:1190.7px;width:118.29999999999995px;top:598.3px;color:#444;overflow:hidden">Z12009NPS0413609816</div>
<div class="c" style="left:1309px;width:109px;top:598.3px;color:#444;overflow:hidden">198 033,98</div>
<div class="c" style="left:1418px;width:118.90000000000009px;top:598.3px;color:#f00;overflow:hidden">-198 033,98</div>
<div class="c" style="left:12.3px;width:53.60000000000001px;top:613.3px;color:#444;overflow:hidden">3</div>
<div class="c" style="left:173.6px;width:192.70000000000002px;top:613.3px;color:#444;overflow:hidden">02.02.2025</div>
<div class="c" style="left:570.4px;width:121.60000000000002px;top:613.3px;color:#444;overflow:hidden">2015511/25-4</div>
<div class="c" style="left:692px;width:155.70000000000005px;top:613.3px;color:#444;overflow:hidden">201065000 000131</div>
<div class="c" style="left:847.7px;width:82.69999999999993px;top:613.3px;color:#444;overflow:hidden">600845218015</div>
<div class="t" style="left:933.4px;top:613.3px;color:#444">Банк Центр Кредит АО</div>
<div class="c" style="left:1116px;width:74.70000000000005px;top:613.3px;color:#444;overflow:hidden">KCJBKZKX</div>
<div class="c" style="left:1190.7px;width:118.29999999999995px;top:613.3px;color:#444;overflow:hidden">Z15987YU236548YU85</div>
<div class="c" style="left:1309px;width:109px;top:613.3px;color:#444;overflow:hidden">143 335</div>
<div class="c" style="left:1418px;width:118.90000000000009px;top:613.3px;color:#f00;overflow:hidden">-143 335</div>
<div class="c" style="left:12.3px;width:53.60000000000001px;top:628.3px;color:#444;overflow:hidden">4</div>
<div class="c" style="left:173.6px;width:192.70000000000002px;top:628.3px;color:#444;overflow:hidden">02.02.2025</div>
<div class="c" style="left:570.4px;width:121.60000000000002px;top:628.3px;color:#444;overflow:hidden">2015511/25-6</div>
<div class="c" style="left:692px;width:155.70000000000005px;top:628.3px;color:#444;overflow:hidden">201065000 000135</div>
<div class="c" style="left:847.7px;width:82.69999999999993px;top:628.3px;color:#444;overflow:hidden">645600073397</div>
<div class="t" style="left:933.4px;top:628.3px;color:#444">ГЦВП</div>
<div class="c" style="left:1116px;width:74.70000000000005px;top:628.3px;color:#444;overflow:hidden">GCVPKZ2A</div>
<div class="c" style="left:1190.7px;width:118.29999999999995px;top:628.3px;color:#444;overflow:hidden">Z12009NPS0413609816</div>
<div class="c" style="left:1309px;width:109px;top:628.3px;color:#444;overflow:hidden">14 405,4</div>
<div class="c" style="left:1418px;width:118.90000000000009px;top:628.3px;color:#f00;overflow:hidden">-14 405,4</div>
<div class="a" style="left:64px;top:499.5px;width:412px;height:65.5px;box-sizing:border-box;border:3.6px solid #ee1c25;border-radius:9px;box-shadow:0 0 10px rgba(0,0,0,.25),inset 0 0 12px rgba(0,0,0,.2)"></div>
<div class="a" style="left:569px;top:499.5px;width:362px;height:65.5px;box-sizing:border-box;border:3.6px solid #ee1c25;border-radius:9px;box-shadow:0 0 10px rgba(0,0,0,.25),inset 0 0 12px rgba(0,0,0,.2)"></div>
<div class="a" style="left:1190px;top:499.5px;width:348px;height:65.5px;box-sizing:border-box;border:3.6px solid #ee1c25;border-radius:9px;box-shadow:0 0 10px rgba(0,0,0,.25),inset 0 0 12px rgba(0,0,0,.2)"></div>
</div>

</body></html>
